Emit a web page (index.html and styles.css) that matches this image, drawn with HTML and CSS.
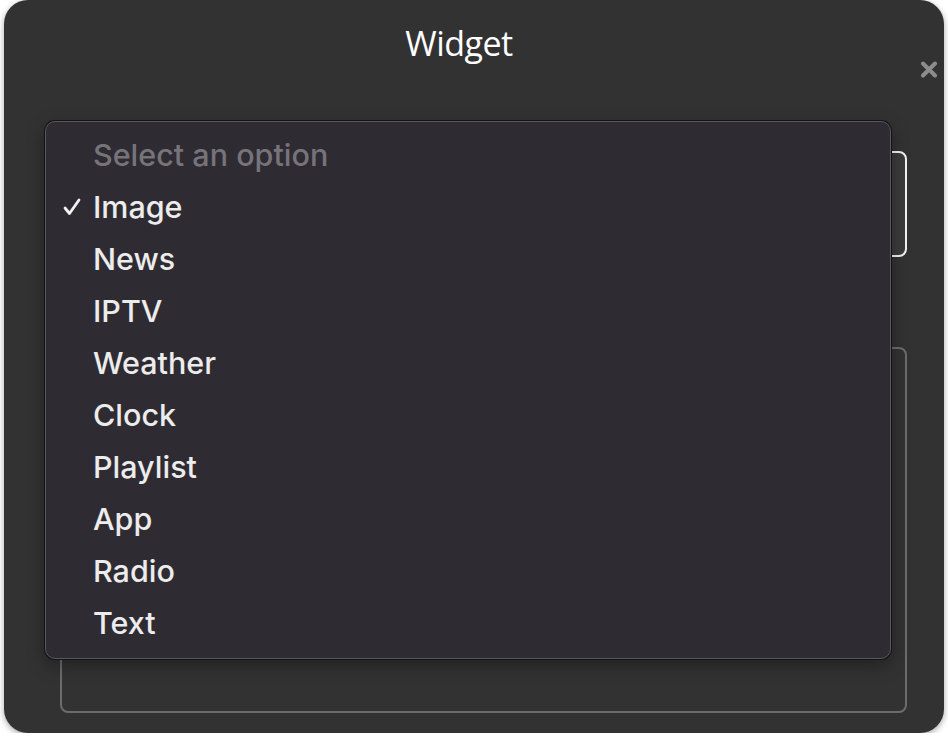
FILE: index.html
```html
<!DOCTYPE html>
<html lang="en">
  <head>
    <meta charset="UTF-8" />
    <meta name="viewport" content="width=device-width, initial-scale=1.0" />
    <title>Widget</title>

    <link rel="stylesheet" href="styles.css">
  </head>
  <body>
    <div class="dialog">
      <h1 class="dialog-title">Widget</h1>
      <button class="close-btn" type="button" aria-label="Close">
        <svg width="16" height="17" viewBox="0 0 16 17">
          <path d="M2 2.5 L14 14.5 M14 2.5 L2 14.5" stroke="#8c8c8c" stroke-width="4" stroke-linecap="round" />
        </svg>
      </button>

      <form class="widget-form">
        <div class="select-box"></div>
        <div class="text-box"></div>
      </form>

      <!-- open select list -->
      <ul class="option-list">
        <li class="option placeholder">Select an option</li>
        <li class="option checked">
          <svg class="check" width="18" height="18" viewBox="0 0 18 18">
            <path d="M2 10 L6.5 15.5 L16 2" fill="none" stroke="#f2f2f2" stroke-width="2.8" stroke-linecap="round" stroke-linejoin="round" />
          </svg>
          Image
        </li>
        <li class="option">News</li>
        <li class="option">IPTV</li>
        <li class="option">Weather</li>
        <li class="option">Clock</li>
        <li class="option">Playlist</li>
        <li class="option">App</li>
        <li class="option">Radio</li>
        <li class="option">Text</li>
      </ul>
    </div>
  </body>
</html>
```

FILE: styles.css
```css
body {
  margin: 0;
  background-color: #ffffff;
  font-family: Inter, "Noto Sans", sans-serif;
}

.dialog {
  position: relative;
  box-sizing: border-box;
  width: 940px;
  height: 733px;
  margin-left: 4px;
  padding: 25px 37px 20px 56px;
  background-color: #323232;
  border-radius: 24px;
  box-shadow: 0 2px 6px rgba(0, 0, 0, 0.35);
  display: flex;
  flex-direction: column;
}

.dialog-title {
  margin: 0;
  padding-right: 49px;
  text-align: center;
  font-family: "Open Sans", sans-serif;
  font-size: 34px;
  font-weight: 400;
  line-height: 36px;
  letter-spacing: -0.5px;
  color: #ffffff;
}

.close-btn {
  position: absolute;
  top: 61px;
  right: 7px;
  width: 16px;
  height: 17px;
  padding: 0;
  border: none;
  background: none;
}

.close-btn svg {
  display: block;
}

.widget-form {
  flex: 1;
  display: flex;
  flex-direction: column;
  gap: 90px;
  margin-top: 90px;
}

.select-box {
  height: 106px;
  box-sizing: border-box;
  border: 2px solid #f2f2f2;
  border-radius: 8px;
  background-color: #3b3b3b;
}

.text-box {
  flex: 1;
  box-sizing: border-box;
  border: 2px solid #6c6c6c;
  border-radius: 8px;
}

.option-list {
  position: absolute;
  top: 121px;
  left: 41px;
  box-sizing: border-box;
  width: 846px;
  height: 538px;
  margin: 0;
  padding: 7px 0 11px;
  list-style: none;
  background-color: #2e2b32;
  border: 1px solid #59575c;
  border-radius: 10px;
  box-shadow: 0 0 0 1px #141414, 0 6px 18px rgba(0, 0, 0, 0.35);
}

.option {
  position: relative;
  padding-left: 47px;
  font-size: 30.5px;
  font-weight: 450;
  line-height: 52px;
  color: #ececec;
}

.option.placeholder {
  color: #76747a;
}

.check {
  position: absolute;
  left: 17px;
  top: 17px;
}
```
